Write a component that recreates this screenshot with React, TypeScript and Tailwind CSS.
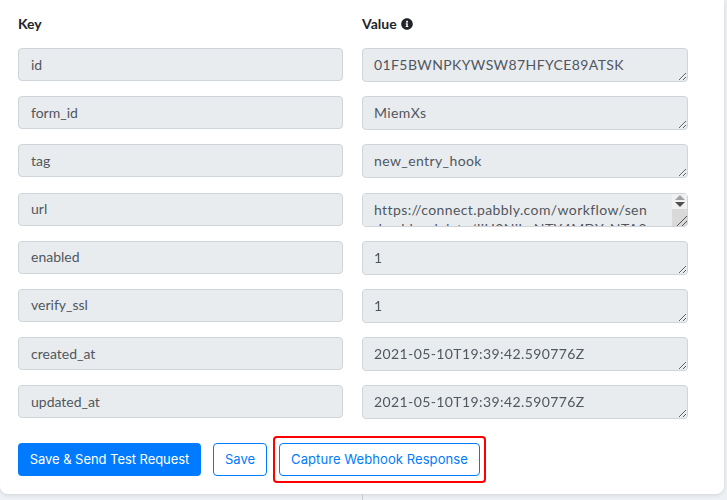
import { FaInfoCircle } from 'react-icons/fa';

const rows = [
  { key: 'id', value: '01F5BWNPKYWSW87HFYCE89ATSK' },
  { key: 'form_id', value: 'MiemXs' },
  { key: 'tag', value: 'new_entry_hook' },
  { key: 'url', value: 'https://connect.pabbly.com/workflow/sendwebhookdata/IjU3NjIwNTY4MDYzNTA0MzE1MjZi' },
  { key: 'enabled', value: '1' },
  { key: 'verify_ssl', value: '1' },
  { key: 'created_at', value: '2021-05-10T19:39:42.590776Z' },
  { key: 'updated_at', value: '2021-05-10T19:39:42.590776Z' },
];

export default function App() {
  return (
    <div className="h-[500px] w-[727px] overflow-hidden bg-[#edf0f4] font-['Lato',sans-serif]">
      <div className="h-[494px] w-[724px] rounded-b-lg bg-white pl-[18px] pr-[40px] pt-[15px] shadow-[0_1px_4px_rgba(0,0,0,0.12)]">
        <div className="grid grid-cols-[325px_326px] gap-x-[19px]">
          <p className="text-[14px] leading-[18px] font-bold text-[#212529]">Key</p>
          <p className="flex items-center gap-1 text-[14px] leading-[18px] font-bold text-[#212529]">
            Value
            <FaInfoCircle size={12} className="text-[#212529]" />
          </p>
        </div>

        <div className="mt-[15px] flex flex-col gap-[14.2px]">
          {rows.map((row) => (
            <div key={row.key} className="grid grid-cols-[325px_326px] items-start gap-x-[19px]">
              <div className="flex h-[33px] items-center rounded border border-[#ced4da] bg-[#e9ecef] pb-px pl-3 text-[14px] text-[#50575e]">
                {row.key}
              </div>
              <div className="relative h-[34px]">
                <textarea
                  readOnly
                  value={row.value}
                  className={`block h-[34px] w-full resize-y rounded border border-[#ced4da] bg-[#e9ecef] pb-0 pt-[6px] pl-[11px] text-[14px] leading-[19px] tracking-[0.4px] text-[#50575e] outline-none ${
                    row.key === 'url' ? 'pr-[32px]' : 'pr-3'
                  }`}
                />
                {row.key === 'url' && (
                  <div className="pointer-events-none absolute inset-y-px right-px flex w-[15px] flex-col">
                    <div className="flex h-[15px] flex-col items-center justify-center gap-[2px] bg-[#f1f1f1]">
                      <div className="h-0 w-0 border-x-[5px] border-b-[5px] border-x-transparent border-b-[#a3a3a3]" />
                      <div className="h-0 w-0 border-x-[5px] border-t-[5px] border-x-transparent border-t-[#505050]" />
                    </div>
                    <div className="flex flex-1 items-end justify-end bg-[#d9d9d9]">
                      <svg width="11" height="11" viewBox="0 0 11 11" className="text-[#555]">
                        <path d="M1 11 L11 1 M6 11 L11 6" stroke="currentColor" strokeWidth="1" fill="none" />
                      </svg>
                    </div>
                  </div>
                )}
              </div>
            </div>
          ))}
        </div>

        <div className="mt-[24px] flex gap-3 text-[13px]">
          <button className="h-[33px] w-[183px] rounded bg-[#007bff] font-['Inter',sans-serif] tracking-[-0.05px] text-white">
            Save &amp; Send Test Request
          </button>
          <button className="h-[33px] w-[54px] rounded border border-[#007bff] font-['Inter',sans-serif] text-[#007bff]">
            Save
          </button>
          <div className="relative">
            <button className="h-[33px] w-[201px] rounded border border-[#007bff] font-['Inter',sans-serif] tracking-[0.08px] text-[#007bff]">
              Capture Webhook Response
            </button>
            <div className="absolute -inset-x-[6px] -inset-y-[7px] rounded-sm border-2 border-[#f00]" />
          </div>
        </div>
      </div>
      <div className="ml-[362px] h-[6px] w-[1px] bg-[#c8ccd0]" />
    </div>
  );
}
